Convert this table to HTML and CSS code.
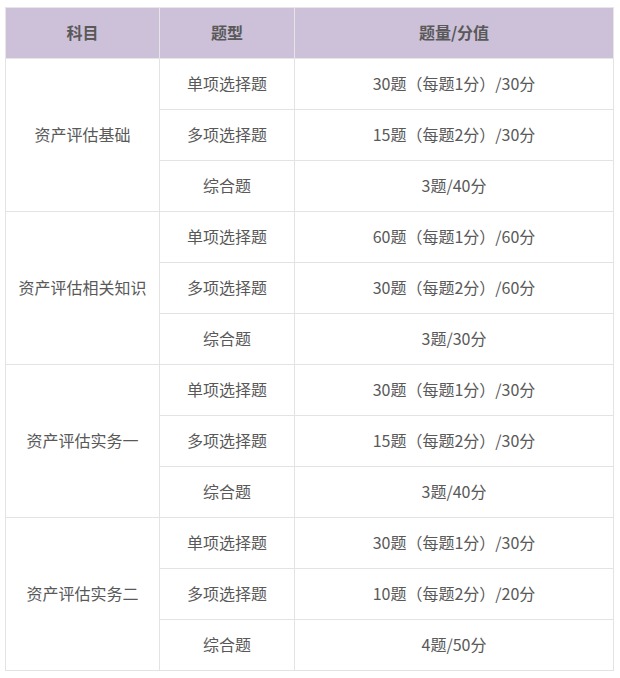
FILE: index.html
```html
<!DOCTYPE html>
<html lang="zh">
<head>
<meta charset="utf-8">
<link rel="stylesheet" href="styles.css">
</head>
<body>
<div class="wrap">
<table class="exam">
<colgroup><col class="c1"><col class="c2"><col class="c3"></colgroup>
<thead>
<tr><th>科目</th><th>题型</th><th>题量/分值</th></tr>
</thead>
<tbody>
<tr><td rowspan="3">资产评估基础</td><td>单项选择题</td><td>30题（每题1分）/30分</td></tr>
<tr><td>多项选择题</td><td>15题（每题2分）/30分</td></tr>
<tr><td>综合题</td><td>3题/40分</td></tr>
<tr><td rowspan="3">资产评估相关知识</td><td>单项选择题</td><td>60题（每题1分）/60分</td></tr>
<tr><td>多项选择题</td><td>30题（每题2分）/60分</td></tr>
<tr><td>综合题</td><td>3题/30分</td></tr>
<tr><td rowspan="3">资产评估实务一</td><td>单项选择题</td><td>30题（每题1分）/30分</td></tr>
<tr><td>多项选择题</td><td>15题（每题2分）/30分</td></tr>
<tr><td>综合题</td><td>3题/40分</td></tr>
<tr><td rowspan="3">资产评估实务二</td><td>单项选择题</td><td>30题（每题1分）/30分</td></tr>
<tr><td>多项选择题</td><td>10题（每题2分）/20分</td></tr>
<tr><td>综合题</td><td>4题/50分</td></tr>
</tbody>
</table>
</div>
</body>
</html>
```
FILE: styles.css
```css
html, body {
  margin: 0;
  padding: 0;
  background: #fff;
}
.wrap {
  padding: 7px 7px 0 5px;
}
.exam {
  border-collapse: collapse;
  width: 608px;
  table-layout: fixed;
  font-family: "Noto Sans CJK SC", "Noto Sans", sans-serif;
  color: #595959;
  font-size: 16px;
  line-height: 20px;
}
.c1 { width: 154px; }
.c2 { width: 135px; }
.c3 { width: 319px; }
.exam th, .exam td {
  border: 1px solid #e3e3e3;
  height: 48px;
  padding: 0 0 2px;
  text-align: center;
  vertical-align: middle;
}
.exam th {
  background: #cdc0d9;
  font-weight: bold;
  font-size: 16px;
  border-color: #e6e6e6;
}
.exam thead th + th {
  border-left-color: #f0f0f0;
}
```
